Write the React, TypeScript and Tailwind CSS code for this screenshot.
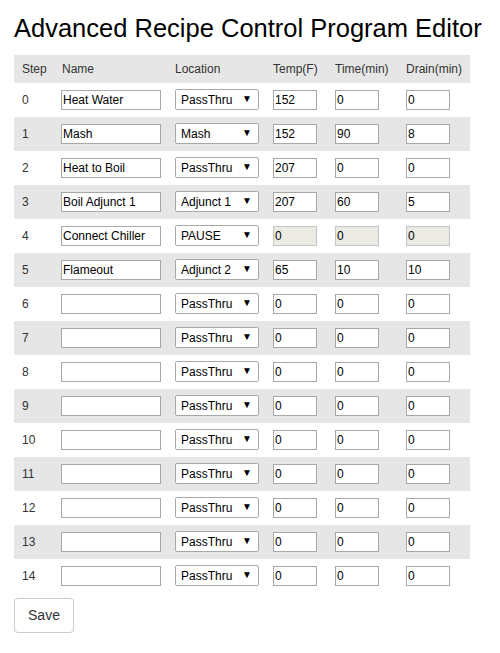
import React from 'react';

type Step = {
  name: string;
  location: string;
  temp: string;
  time: string;
  drain: string;
  disabled?: boolean;
};

const STEPS: Step[] = [
  { name: 'Heat Water', location: 'PassThru', temp: '152', time: '0', drain: '0' },
  { name: 'Mash', location: 'Mash', temp: '152', time: '90', drain: '8' },
  { name: 'Heat to Boil', location: 'PassThru', temp: '207', time: '0', drain: '0' },
  { name: 'Boil Adjunct 1', location: 'Adjunct 1', temp: '207', time: '60', drain: '5' },
  { name: 'Connect Chiller', location: 'PAUSE', temp: '0', time: '0', drain: '0', disabled: true },
  { name: 'Flameout', location: 'Adjunct 2', temp: '65', time: '10', drain: '10' },
  ...Array.from({ length: 9 }, () => ({ name: '', location: 'PassThru', temp: '0', time: '0', drain: '0' })),
];

const LOCATIONS = ['PassThru', 'Mash', 'Adjunct 1', 'Adjunct 2', 'Adjunct 3', 'PAUSE'];

const NumInput = ({ value, disabled }: { value: string; disabled?: boolean }) => (
  <input
    type="text"
    defaultValue={value}
    disabled={disabled}
    className={`block w-[44px] h-[20px] px-[1px] border border-[#a8a8a8] text-[12px] text-black outline-none ${disabled ? 'bg-[#ebebe4] border-[#c4c4c4]' : 'bg-white'}`}
  />
);

const App = () => {
  return (
    <div className="w-[500px] min-h-[653px] bg-white px-[14px] font-['Liberation_Sans',Arial,sans-serif] text-[#333]">
      <h1 className="pt-[16px] mb-[13px] text-[25.5px] leading-none text-black">Advanced Recipe Control Program Editor</h1>

      <table className="w-[456px] table-fixed border-collapse text-[12px]">
        <colgroup>
          <col className="w-[40px]" />
          <col className="w-[113px]" />
          <col className="w-[98px]" />
          <col className="w-[62px]" />
          <col className="w-[71px]" />
          <col className="w-[72px]" />
        </colgroup>
        <thead>
          <tr className="h-[28px] bg-[#e6e6e6] text-left">
            <th className="pl-[8px] font-normal">Step</th>
            <th className="pl-[8px] font-normal">Name</th>
            <th className="pl-[8px] font-normal">Location</th>
            <th className="pl-[8px] font-normal">Temp(F)</th>
            <th className="pl-[8px] font-normal">Time(min)</th>
            <th className="pl-[8px] font-normal">Drain(min)</th>
          </tr>
        </thead>
        <tbody>
          {STEPS.map((s, idx) => (
            <tr key={idx} className={`h-[34px] ${idx % 2 === 1 ? 'bg-[#e6e6e6]' : 'bg-white'}`}>
              <td className="pl-[8px]">{idx}</td>
              <td className="pl-[7px]">
                <input
                  type="text"
                  defaultValue={s.name}
                  className="block w-[100px] h-[20px] px-[1px] border border-[#a8a8a8] bg-white text-[12px] text-black outline-none"
                />
              </td>
              <td className="pl-[8px]">
                <div className="relative w-[84px] h-[21px]">
                  <select
                    defaultValue={s.location}
                    className="appearance-none block w-full h-full pl-[5px] pr-[14px] border border-[#a8a8a8] rounded-[2px] bg-white text-[12px] text-black outline-none"
                  >
                    {LOCATIONS.map((loc) => (
                      <option key={loc} value={loc}>
                        {loc}
                      </option>
                    ))}
                  </select>
                  <span className="pointer-events-none absolute right-[7px] top-[4px] text-[10px] leading-[12px] text-black">▼</span>
                </div>
              </td>
              <td className="pl-[8px]">
                <NumInput value={s.temp} disabled={s.disabled} />
              </td>
              <td className="pl-[8px]">
                <NumInput value={s.time} disabled={s.disabled} />
              </td>
              <td className="pl-[8px]">
                <NumInput value={s.drain} disabled={s.disabled} />
              </td>
            </tr>
          ))}
        </tbody>
      </table>

      <button className="mt-[5px] w-[60px] h-[35px] border border-[#cccccc] rounded-[4px] bg-white text-[14px] text-[#333]">
        Save
      </button>
    </div>
  );
};

export default App;
